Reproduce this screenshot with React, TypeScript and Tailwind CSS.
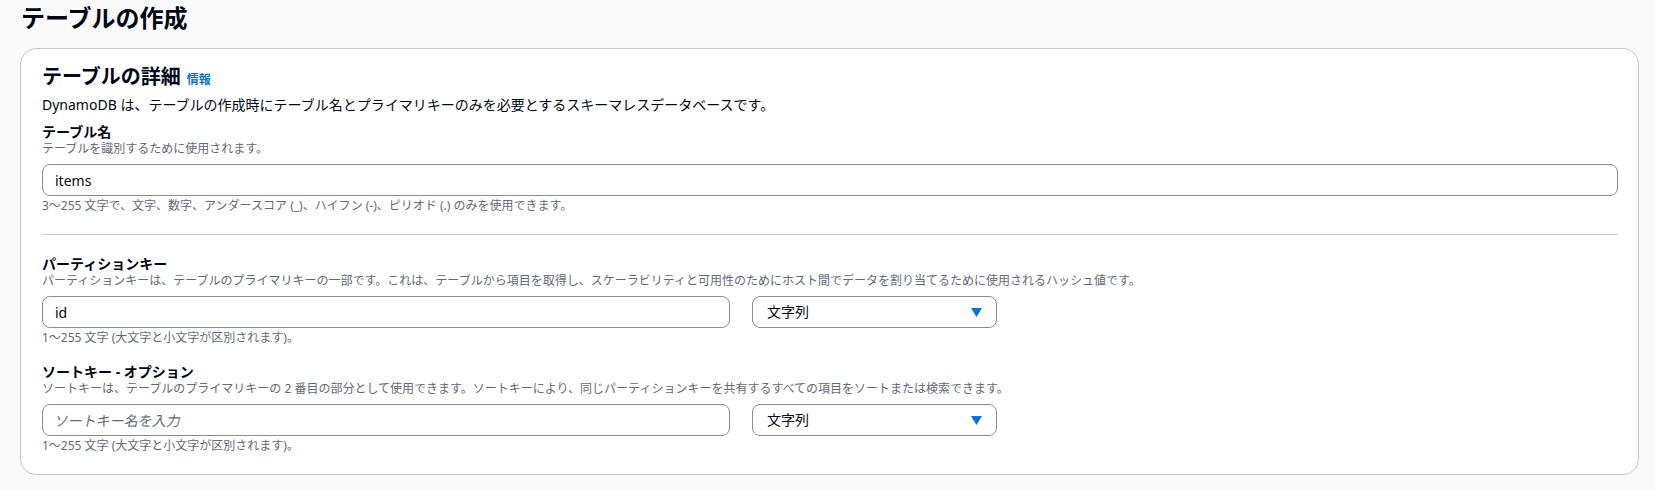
const font = { fontFamily: '"Noto Sans", "Noto Sans CJK JP", sans-serif' };

const TypeSelect = () => (
  <div className="ml-[22px] flex h-[32px] w-[245px] items-center justify-between rounded-[8px] border border-[#8c8c94] bg-white pl-[14px] pr-[14px]">
    <span className="text-[14px] leading-[18px] text-[#000716]">文字列</span>
    <svg width="11" height="9" viewBox="0 0 11 9">
      <polygon points="0,0 11,0 5.5,9" fill="#0972d3" />
    </svg>
  </div>
);

const App = () => {
  return (
    <div className="min-h-[490px] w-full bg-[#fafafa] text-[#000716]" style={font}>
      <h1 className="pl-[21px] text-[24px] font-bold leading-[36px]">テーブルの作成</h1>

      <div className="ml-[20px] mt-[12px] w-[1619px] rounded-[16px] border border-[#c6c6cd] bg-white pb-[20px] pl-[21px] pt-[16px]">
        <div className="flex items-baseline">
          <h2 className="text-[20px] font-bold leading-[24px]">テーブルの詳細</h2>
          <a className="ml-[6px] text-[12px] font-bold leading-[24px] text-[#0972d3]">情報</a>
        </div>
        <p className="mt-[3px] text-[14px] leading-[20px]">
          DynamoDB は、テーブルの作成時にテーブル名とプライマリキーのみを必要とするスキーマレスデータベースです。
        </p>

        <div className="w-[1576px]">
          {/* テーブル名 */}
          <div className="mt-[8px] text-[14px] font-bold leading-[18px]">テーブル名</div>
          <div className="text-[12px] leading-[16px] text-[#5f6b7a]">テーブルを識別するために使用されます。</div>
          <div className="mt-[7px] flex h-[32px] items-center rounded-[8px] border border-[#8c8c94] px-[12px] text-[14px]">
            items
          </div>
          <div className="mt-[2px] text-[12px] leading-[16px] text-[#5f6b7a]">
            3〜255 文字で、文字、数字、アンダースコア (_)、ハイフン (-)、ピリオド (.) のみを使用できます。
          </div>

          <div className="mt-[20px] border-t border-[#c6c6cd]" />

          {/* パーティションキー */}
          <div className="mt-[20px] text-[14px] font-bold leading-[18px]">パーティションキー</div>
          <div className="text-[12px] leading-[16px] text-[#5f6b7a]">
            パーティションキーは、テーブルのプライマリキーの一部です。これは、テーブルから項目を取得し、スケーラビリティと可用性のためにホスト間でデータを割り当てるために使用されるハッシュ値です。
          </div>
          <div className="mt-[7px] flex">
            <div className="flex h-[32px] w-[688px] items-center rounded-[8px] border border-[#8c8c94] px-[12px] text-[14px]">
              id
            </div>
            <TypeSelect />
          </div>
          <div className="mt-[2px] text-[12px] leading-[16px] text-[#5f6b7a]">1〜255 文字 (大文字と小文字が区別されます)。</div>

          {/* ソートキー */}
          <div className="mt-[17px] text-[14px] font-bold leading-[18px]">ソートキー - オプション</div>
          <div className="text-[12px] leading-[16px] text-[#5f6b7a]">
            ソートキーは、テーブルのプライマリキーの 2 番目の部分として使用できます。ソートキーにより、同じパーティションキーを共有するすべての項目をソートまたは検索できます。
          </div>
          <div className="mt-[7px] flex">
            <div className="flex h-[32px] w-[688px] items-center rounded-[8px] border border-[#8c8c94] px-[12px] text-[14px]">
              <span className="inline-block -skew-x-12 text-[#5f6b7a]">ソートキー名を入力</span>
            </div>
            <TypeSelect />
          </div>
          <div className="mt-[2px] text-[12px] leading-[16px] text-[#5f6b7a]">1〜255 文字 (大文字と小文字が区別されます)。</div>
        </div>
      </div>
    </div>
  );
};

export default App;
